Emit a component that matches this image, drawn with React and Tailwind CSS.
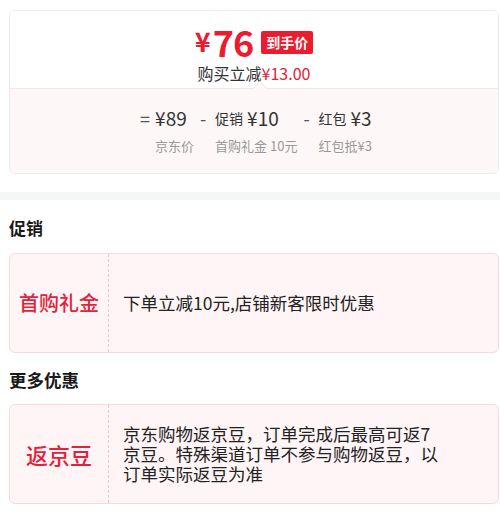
import React from "react";

const FONT = { fontFamily: '"Noto Sans CJK SC", "Noto Sans", sans-serif' };

function PriceCol({ op, top, label }) {
  return (
    <div className="flex items-start">
      <span className="w-[15px] text-[18px] leading-[24px] text-[#555]">{op}</span>
      <div className="flex flex-col items-start">
        <div className="h-[24px] flex items-end leading-[24px] text-[#333]">{top}</div>
        <div className="mt-[8px] text-[13px] leading-[16px] text-[#999]">{label}</div>
      </div>
    </div>
  );
}

function OfferCard({ title, titleSize, children }) {
  return (
    <div className="ml-[9px] w-[490px] h-[100px] flex rounded-[6px] border border-[#f6dadd] bg-[#fff5f6]">
      <div className="w-[99px] shrink-0 flex items-center justify-center border-r border-dashed border-[#efc6cb]">
        <span className={`${titleSize} font-medium text-[#e3213a]`}>{title}</span>
      </div>
      <div className="flex items-center pl-[14px]">{children}</div>
    </div>
  );
}

export default function App() {
  return (
    <div className="w-[500px] h-[516px] bg-white overflow-hidden" style={FONT}>
      {/* Price summary */}
      <div className="pt-[10px]">
        <div className="ml-[9px] w-[490px] h-[164px] rounded-[6px] border border-[#ececec] overflow-hidden flex flex-col">
          <div className="h-[77px] bg-white flex flex-col items-center pt-[11px]">
            <div className="flex items-center h-[38px]">
              <span className="text-[#ec1b2e] font-bold text-[27px] leading-[38px] mr-[2px]">¥</span>
              <span className="text-[#ec1b2e] font-bold text-[36px] leading-[38px] tracking-[-1px]">76</span>
              <span className="ml-[8px] mt-[3px] h-[23px] px-[5px] rounded-[2px] bg-[#ec1b2e] text-white font-bold text-[14px] leading-[23px]">
                到手价
              </span>
            </div>
            <div className="mt-[2px] text-[16px] leading-[22px] text-[#333]">
              购买立减<span className="text-[#e3213a]">¥13.00</span>
            </div>
          </div>
          <div className="relative flex-1 bg-[#fdf7f7] border-t border-[#f1eaea] flex justify-center gap-[6px] pt-[17px] pl-[4px]">
            <span className="absolute -top-[6px] left-[245px] w-[10px] h-[10px] rotate-45 bg-[#fdf7f7] border-l border-t border-[#f1eaea]" />
            <PriceCol
              op="="
              top={<span className="text-[19px]">¥89</span>}
              label="京东价"
            />
            <PriceCol
              op="-"
              top={
                <>
                  <span className="text-[14px] mr-[4px]">促销</span>
                  <span className="text-[19px]">¥10</span>
                </>
              }
              label="首购礼金 10元"
            />
            <PriceCol
              op="-"
              top={
                <>
                  <span className="text-[14px] mr-[4px]">红包</span>
                  <span className="text-[19px]">¥3</span>
                </>
              }
              label="红包抵¥3"
            />
          </div>
        </div>
      </div>

      {/* Band */}
      <div className="mt-[18px] h-[8px] bg-[#f5f6f8]" />

      {/* 促销 */}
      <div className="pl-[9px] pt-[16px] pb-[13px] text-[17px] leading-[24px] font-bold text-[#1a1a1a]">促销</div>
      <OfferCard title="首购礼金" titleSize="text-[20px]">
        <span className="text-[17.5px] leading-[22px] text-[#222]">下单立减10元,店铺新客限时优惠</span>
      </OfferCard>

      {/* 更多优惠 */}
      <div className="pl-[9px] pt-[17px] pb-[14px] text-[17.5px] leading-[20px] font-bold text-[#1a1a1a]">更多优惠</div>
      <OfferCard title="返京豆" titleSize="text-[22px]">
        <p className="w-[322px] text-[17.5px] leading-[20px] text-[#222]">
          京东购物返京豆，订单完成后最高可返7京豆。特殊渠道订单不参与购物返豆，以订单实际返豆为准
        </p>
      </OfferCard>
    </div>
  );
}
